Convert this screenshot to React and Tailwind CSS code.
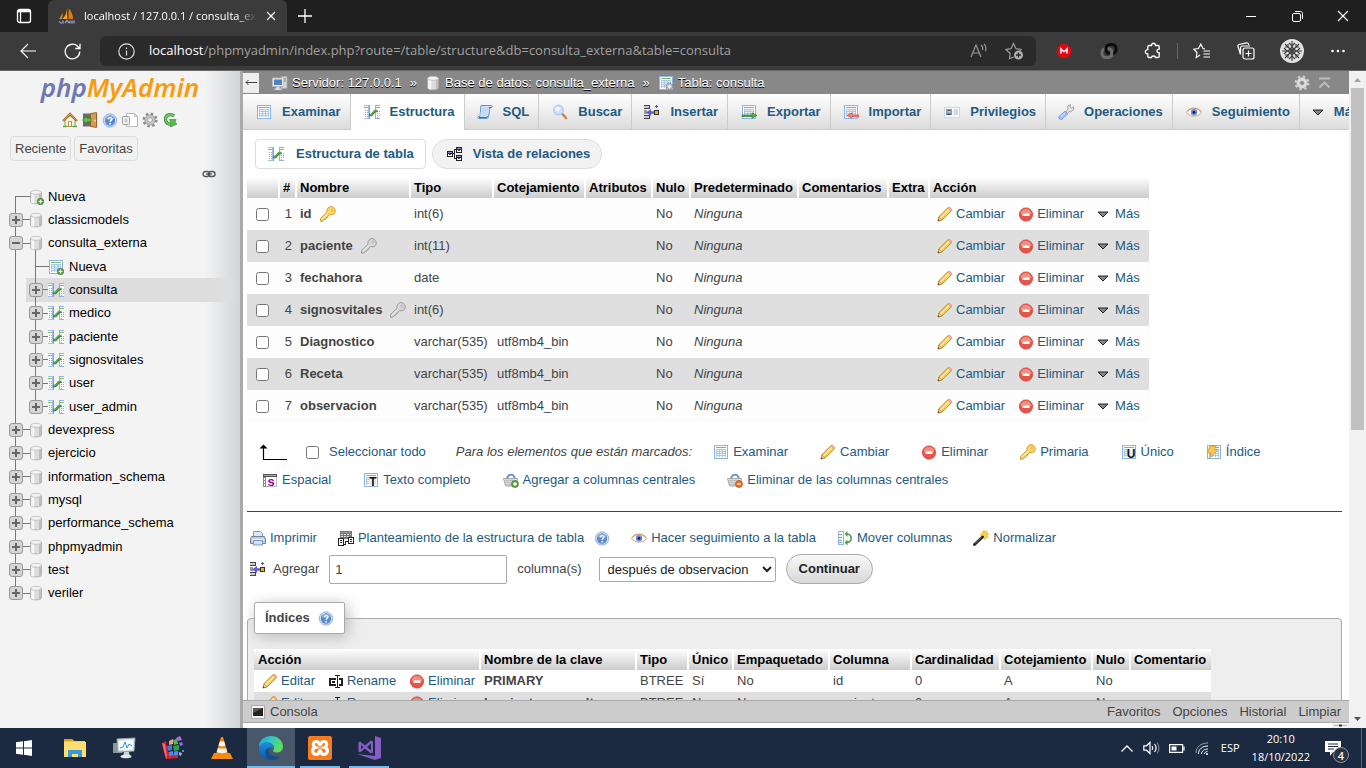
import { useState } from "react";

// 16x16 icon frame
function Ico({ children, size = 16, className = "" }) {
    return (
        <svg
            viewBox="0 0 16 16"
            width={size}
            height={size}
            aria-hidden="true"
            className={`shrink-0 ${className}`}
        >
            {children}
        </svg>
    );
}

/* ---------- phpMyAdmin icons ---------- */

function Grid() {
    return (
        <g shapeRendering="crispEdges">
            <rect x="1" y="1" width="14" height="14" fill="#8db3e2" />
            <rect x="2" y="2" width="12" height="12" fill="#fff" />
            <rect x="3" y="3" width="10" height="1" fill="#7dbb6c" />
            <path d="M3 5h10v8H3z" fill="#a9c6ea" />
            <path d="M4 6h2v1H4zM7 6h2v1H7zM10 6h2v1h-2zM4 8h2v1H4zM7 8h2v1H7zM10 8h2v1h-2zM4 10h2v1H4zM7 10h2v1H7zM10 10h2v1h-2zM4 12h2v1H4zM7 12h2v1H7zM10 12h2v1h-2z" fill="#fff" />
        </g>
    );
}

function BrowseIcon() {
    return <Ico><Grid /></Ico>;
}

function StructIcon() {
    return (
        <Ico>
            <g shapeRendering="crispEdges">
                <path d="M0 1h5v14H0z" fill="#9fc0ea" />
                <path d="M0 2h4v12H0z" fill="#fff" />
                <path d="M0 3h4v1H0z" fill="#7dbb6c" />
                <path d="M1 6h1v1H1zM3 6h1v1H3zM1 8h1v1H1zM3 8h1v1H3zM1 10h1v1H1zM3 10h1v1H3zM1 12h1v1H1zM3 12h1v1H3z" fill="#7ea9dd" />
                <path d="M5 1h1v14H5z" fill="#7ba6dc" />
                <path d="M11 1h5v14h-5z" fill="#8db3e2" />
                <path d="M12 2h4v12h-4z" fill="#fff" />
                <path d="M12 3h4v1h-4z" fill="#7dbb6c" />
                <path d="M13 7h1v1h-1zM15 7h1v1h-1zM13 9h1v1h-1zM15 9h1v1h-1zM13 11h1v1h-1zM15 11h1v1h-1zM13 13h1v1h-1z" fill="#7ea9dd" />
            </g>
            <path d="M5 11h2.500l3.500-4h2.500" stroke="#37803a" strokeWidth="2.600" fill="none" strokeLinejoin="round" />
            <path d="M5.500 10.700h1.800l3.500-4h2.200" stroke="#5fae5a" strokeWidth="1.200" fill="none" />
        </Ico>
    );
}

function SqlIcon() {
    return (
        <Ico>
            <path d="M4 1.500h10.500c1 0 1 2-.3 2H13l-1.500 9c-.2 1.500-1 2-2 2H1.500c-1 0-1.200-2 0-2H3z" fill="#dcebfb" stroke="#5b90cf" />
            <path d="M4.500 2l-1.500 11h7l1.500-10z" fill="#c3dbf7" />
            <path d="M2 13.500h8l1-1.500" stroke="#3f76ba" fill="none" />
            <path d="M11.500 3.500h3" stroke="#3f76ba" />
        </Ico>
    );
}

function SearchIcon() {
    return (
        <Ico>
            <path d="M10 9.500l4 4.500" stroke="#c58a4a" strokeWidth="2.600" strokeLinecap="round" />
            <circle cx="6.500" cy="6" r="4.700" fill="#cfe4fb" stroke="#b4c9e6" strokeWidth="1.400" />
            <circle cx="5.500" cy="5" r="2.200" fill="#eef6ff" />
        </Ico>
    );
}

function InsertIcon() {
    return (
        <Ico>
            <g shapeRendering="crispEdges">
                <path d="M0 1h6v1H0zM0 4h6v1H0zM0 11h6v1H0zM0 14h6v1H0zM5 1h1v4H5zM5 11h1v4H5z" fill="#444" />
                <path d="M0 2h5v2H0zM0 12h5v2H0z" fill="#ccc" />
                <path d="M0 6h3v4H0z" fill="#999" />
                <path d="M10 6h5v5h-5z" fill="#333" />
                <path d="M11 7h3v3h-3z" fill="#f4b400" />
                <path d="M12 1h1v3h-1zM11 2h3v1h-3z" fill="#5a4fcf" />
            </g>
            <path d="M2 8.500L7 5v2.200h3v2.600H7V12z" fill="#5f5fd3" />
        </Ico>
    );
}

function ExportIcon() {
    return (
        <Ico>
            <Grid />
            <path d="M1 11h10V8.800l5 2.700-5 2.700V12.500H1z" fill="#5da84f" stroke="#2f7a2a" strokeWidth=".7" />
        </Ico>
    );
}

function ImportIcon() {
    return (
        <Ico>
            <Grid />
            <path d="M16 11H9V8.800l-5 2.700 5 2.700v-1.700h7z" fill="#f58a8a" stroke="#dc3a3a" strokeWidth=".7" />
        </Ico>
    );
}

function RightsIcon() {
    return (
        <Ico>
            <rect x=".5" y="3.500" width="15" height="10" fill="#f7f9fc" stroke="#d3d8df" />
            <rect x="2" y="5" width="6" height="6" fill="#6ea4e4" />
            <circle cx="5" cy="7.500" r="1.700" fill="#e2b07a" />
            <path d="M3.300 6.800c.5-1.500 3-1.500 3.400 0z" fill="#6b3d1c" />
            <path d="M2.500 11c.5-2 4.500-2 5 0z" fill="#2c5f9f" />
            <path d="M9.500 6h4.500M9.500 8h4.500M9.500 10h4.500" stroke="#9db5d2" strokeWidth=".9" />
        </Ico>
    );
}

function WrenchIcon() {
    return (
        <Ico>
            <path d="M8 8l2-3-.3-3L12.500.5l-.3 2.500 1.300 1 2.300-1-.5 3-2.500 1.800-1.800-.3L9.500 9.500z" fill="#e6e9ec" stroke="#8c939b" strokeWidth=".8" />
            <path d="M1.200 12.300L7 7.200l2.700 2.600L4.500 15c-2 1.500-5-.7-3.300-2.700z" fill="#a4c3f4" stroke="#6c8fce" strokeWidth=".8" />
            <path d="M3 12.500l4-3.600" stroke="#d5e5ff" />
        </Ico>
    );
}

function EyeIcon() {
    return (
        <Ico>
            <path d="M.5 8.500C3 3 13 3 15.500 8.500 13 13.500 3 13.500.5 8.500z" fill="#f6ded0" stroke="#dcae92" />
            <path d="M2 8.500C4 5 12 5 14 8.500 12 12 4 12 2 8.500z" fill="#fff" />
            <circle cx="8" cy="8.200" r="3.200" fill="#6b96dc" />
            <circle cx="8" cy="8.200" r="1.500" fill="#16284f" />
            <path d="M1 7.500C4 3 12 3 15 7.500" stroke="#c99777" fill="none" />
        </Ico>
    );
}

function Caret() {
    return (
        <svg viewBox="0 0 12 16" width="12" height="16" aria-hidden="true" className="shrink-0">
            <path d="M1 6h10L6 11z" fill="#888" stroke="#111" strokeWidth=".9" />
        </svg>
    );
}

function RelationIcon() {
    return (
        <Ico>
            <g shapeRendering="crispEdges">
                <path d="M0 5h6v6H0zM9 1h6v6H9zM9 9h6v6H9z" fill="#222" />
                <path d="M1 6h4v1H1zM10 2h4v1h-4zM10 10h4v1h-4z" fill="#8f8fe0" />
                <path d="M1 8h4v2H1zM10 4h4v2h-4zM10 12h4v2h-4z" fill="#fff" />
                <path d="M2 8h2v1H2zM11 4h2v1h-2zM11 12h2v1h-2z" fill="#555" />
                <path d="M6 7h1v1H6zM7 3h2v1H7zM7 4h1v8H7zM7 12h2v1H7z" fill="#222" />
            </g>
        </Ico>
    );
}

function KeyIcon({ gray }) {
    const fill = gray ? "#d8d8d8" : "#ffd75e";
    const line = gray ? "#909090" : "#c98f1c";
    return (
        <Ico>
            <path
                d="M7.800 2.500c1.500-2.500 5-2.500 6.600 0s.8 5.500-1.900 6.100c-1 .3-2 .2-2.800-.2L8.200 9.700l-.6 1.700-1.500.4-.5 1.500-1.600.3L2.800 15.200H.6l-.1-2.600 6.500-6.300c-.3-1.300.0-2.700.8-3.800z"
                fill={fill}
                stroke={line}
                strokeWidth=".9"
            />
            <circle cx="12" cy="4" r="1.100" fill="#fff" stroke={line} strokeWidth=".6" />
            <path d="M2 12.800l6-5.600" stroke="#fff" strokeOpacity=".7" />
        </Ico>
    );
}

function PencilIcon() {
    return (
        <Ico>
            <path d="M1 15l1-4.500L11 1.700c1.200-1.200 4.500 1.700 3.300 3.200L5 14z" fill="#f9c956" stroke="#b98424" strokeWidth=".9" />
            <path d="M3.800 11.600L12.300 3.400" stroke="#fff0b8" strokeWidth="1.300" />
            <path d="M10.800 2.300l3 3 .9-1c.6-1.500-2-3.800-3-2.900z" fill="#f1a98c" />
            <path d="M1 15l.9-3.800L4.800 14z" fill="#f3dfc0" stroke="#8a6a3a" strokeWidth=".5" />
            <path d="M1 15l.4-1.700 1.300 1.300z" fill="#333" />
        </Ico>
    );
}

function DropIcon() {
    return (
        <Ico>
            <circle cx="8" cy="8.500" r="6.600" fill="#e8564a" stroke="#c9403a" strokeWidth=".8" />
            <path d="M2.500 7.500a5.600 5.600 0 0111 0c-3 1.200-8 1.200-11 0z" fill="#f38d80" />
            <rect x="4.500" y="7.500" width="7" height="2.400" fill="#fff" />
        </Ico>
    );
}

// a table icon with one glyph over it
function LetterIcon({ letter, tone = "#111" }) {
    return (
        <Ico>
            <Grid />
            <rect x="6" y="5" width="8" height="9" fill="#fff" fillOpacity=".6" />
            <text x="10" y="14" fontSize="12" fontWeight="700" textAnchor="middle" fill={tone} fontFamily="Liberation Sans, sans-serif">
                {letter}
            </text>
        </Ico>
    );
}

function SpatialIcon() {
    return (
        <Ico>
            <g shapeRendering="crispEdges">
                <path d="M1 2h14v3H1z" fill="#555" />
                <path d="M2 3h12v1H2z" fill="#a9a9a9" />
                <path d="M1 5h3v10H1z" fill="#888" />
                <path d="M2 6h1v2H2zM2 9h1v2H2zM2 12h1v2H2z" fill="#fff" />
                <path d="M14 5h1v10h-1zM4 14h10v1H4z" fill="#bbb" />
            </g>
            <text x="9" y="14" fontSize="13" fontWeight="700" textAnchor="middle" fill="#a0009a" fontFamily="Liberation Sans, sans-serif">
                s
            </text>
        </Ico>
    );
}

function IndexIcon() {
    return (
        <Ico>
            <Grid />
            <path d="M4 2h6L8.500 5.500H12L3.500 14.500 5 9H1z" fill="#f7c65c" stroke="#d6962c" strokeWidth=".8" />
        </Ico>
    );
}

function BasketIcon({ minus }) {
    return (
        <Ico>
            <path d="M4 7.500C4.500 1 11.500 1 12 7.500" stroke="#6b9bd1" strokeWidth="2" fill="none" />
            <path d="M.5 6.500h14l-1.500 7.500H2.500z" fill="#f2f2f2" stroke="#a5a5a5" />
            <path d="M3 7v6M5 7v7M7 7v7M9 7v7M11 7v6M1 8.500h13M1.500 10.500h12M2 12.500h10" stroke="#b5b5b5" strokeWidth=".8" />
            <circle cx="12" cy="12" r="3.500" fill={minus ? "#ef6c1f" : "#5fa544"} stroke={minus ? "#c44d0c" : "#3c7d26"} strokeWidth=".7" />
            <path d={minus ? "M10 12h4" : "M10 12h4M12 10v4"} stroke="#fff" strokeWidth="1.300" />
        </Ico>
    );
}

function PrintIcon() {
    return (
        <Ico>
            <path d="M3.500 7V1.500h7l2 2V7z" fill="#d9e9fb" stroke="#6c9bd3" />
            <path d="M1.500 6.500h13l1 3v4H.5v-4z" fill="#c9ced6" stroke="#7a838f" />
            <path d="M2 9.500h12" stroke="#f4f4f4" />
            <path d="M3.500 10.500h9v4.500h-9z" fill="#cfe2fa" stroke="#6c9bd3" />
        </Ico>
    );
}

function ProposeIcon() {
    return (
        <Ico>
            <g shapeRendering="crispEdges">
                <path d="M2 1h12v8H2z" fill="#777" />
                <path d="M3 4h2v1H3zM6 4h2v1H6zM9 4h2v1H9zM12 4h1v1h-1zM3 6h2v1H3zM6 6h2v1H6zM9 6h2v1H9z" fill="#ddd" />
                <path d="M3 2h10v1H3z" fill="#999" />
                <path d="M0 8h6v8H0zM10 7h6v7h-6z" fill="#222" />
                <path d="M1 9h4v6H1zM11 8h4v5h-4z" fill="#fff" />
                <path d="M2 10h2v1H2zM2 12h2v1H2zM12 9h2v1h-2zM12 11h2v1h-2zM6 14h2v1H6zM7 11h1v3H7zM8 11h2v1H8z" fill="#222" />
            </g>
        </Ico>
    );
}

function HelpIcon() {
    return (
        <Ico>
            <circle cx="8" cy="8.500" r="6.600" fill="#dfeafa" stroke="#7fa3d6" strokeWidth=".9" />
            <circle cx="8" cy="8.500" r="5.200" fill="#5a8acb" />
            <path d="M3.500 7a4.700 4.700 0 019 0c-2.500 1-6.500 1-9 0z" fill="#86aee4" />
            <path d="M6.200 7.300c0-2.200 3.700-2.200 3.700-.2 0 1.300-1.800 1.300-1.800 2.700" stroke="#fff" strokeWidth="1.400" fill="none" />
            <circle cx="8.100" cy="11.700" r=".9" fill="#fff" />
        </Ico>
    );
}

function MoveIcon() {
    return (
        <Ico>
            <g shapeRendering="crispEdges">
                <path d="M1 1h6v14H1z" fill="#8db3e2" />
                <path d="M2 2h4v12H2z" fill="#fff" />
                <path d="M2 4h3v1H2zM2 7h3v1H2zM2 10h3v1H2zM2 12h3v1H2z" fill="#7ea9dd" />
            </g>
            <path d="M10 4c5.500.5 5.500 8 0 8.500" stroke="#4b9c4b" strokeWidth="1.600" fill="none" />
            <path d="M10.500 1v6L7.500 4zM10.500 9.500v6l-3-3z" fill="#4b9c4b" />
        </Ico>
    );
}

function WandIcon() {
    return (
        <Ico>
            <path d="M11 0l.8 2.700L14 1l-.8 2.600L16 4l-2.500 1.500L15.500 8l-2.800-.5L12 10l-1.500-2.500L8 8.500 9 6 7 4.500l2.500-.6L9 1.500l1.500 1z" fill="#ffd34a" stroke="#e09a1a" strokeWidth=".5" />
            <path d="M1.500 14.500L9.500 7" stroke="#222" strokeWidth="2.800" strokeLinecap="round" />
            <path d="M2 13.500L8.500 7.300" stroke="#8b8b8b" strokeWidth=".8" />
        </Ico>
    );
}

function RenameIcon() {
    return (
        <Ico>
            <g shapeRendering="crispEdges">
                <path d="M1 5h7v2H3v4h5v2H1zM11 5h4v8h-4v-2h2V7h-2z" fill="#222" />
                <path d="M4 8h3v2H4z" fill="#222" />
                <path d="M7 2h5v1H7zM7 14h5v1H7zM9 3h1v11H9z" fill="#222" />
            </g>
        </Ico>
    );
}

function DbIcon({ add }) {
    return (
        <Ico>
            <path d="M2.500 3.500v9.500c0 2.500 11 2.500 11 0V3.500z" fill="#dcdcdc" stroke="#a9a9a9" strokeWidth=".8" />
            <path d="M4 5v9M5.500 5v9.500" stroke="#fafafa" strokeWidth="1.300" />
            <path d="M12 5v9" stroke="#b5b5b5" strokeWidth="1.500" />
            <ellipse cx="8" cy="3.300" rx="5.500" ry="2" fill="#f3f3f3" stroke="#b5b5b5" strokeWidth=".7" />
            {add && (
                <>
                    <circle cx="12.500" cy="12.500" r="3.200" fill="#5fa544" stroke="#3c7d26" strokeWidth=".7" />
                    <path d="M10.700 12.500h3.600M12.500 10.700v3.600" stroke="#fff" strokeWidth="1.200" />
                </>
            )}
        </Ico>
    );
}

function NewTableIcon() {
    return (
        <Ico>
            <Grid />
            <circle cx="12.500" cy="12.500" r="3.200" fill="#5fa544" stroke="#3c7d26" strokeWidth=".7" />
            <path d="M10.700 12.500h3.600M12.500 10.700v3.600" stroke="#fff" strokeWidth="1.200" />
        </Ico>
    );
}

function ServerIcon() {
    return (
        <Ico>
            <path d="M9.500 1.500h5.500v12h-5.500z" fill="#d5d5d5" stroke="#aaa" strokeWidth=".8" />
            <path d="M10.500 4h3.500M10.500 6h3.500" stroke="#777" strokeWidth=".8" />
            <rect x=".5" y="3" width="11" height="8.500" fill="#e8e8e8" stroke="#bbb" strokeWidth=".8" />
            <rect x="2" y="4.500" width="8" height="5.500" fill="#4d83c4" />
            <path d="M4.500 11.500h3v2h2v1.500h-7v-1.500h2z" fill="#ddd" />
        </Ico>
    );
}

function TableGearIcon() {
    return (
        <Ico>
            <Grid />
            <circle cx="11.500" cy="11.500" r="3.200" fill="#c9c9c9" stroke="#8a8a8a" strokeDasharray="1.500 1" strokeWidth="1.500" />
            <circle cx="11.500" cy="11.500" r="1.200" fill="#fff" />
        </Ico>
    );
}

function GearIcon({ fill = "#c4c4c4", line = "#8c8c8c", hole = "#f3f3f3" }) {
    return (
        <Ico>
            <circle cx="8" cy="8" r="6.200" fill="none" stroke={line} strokeWidth="2.600" strokeDasharray="2.400 2.470" />
            <circle cx="8" cy="8" r="5.200" fill={fill} stroke={line} strokeWidth=".6" />
            <circle cx="8" cy="8" r="2.300" fill={hole} stroke={line} strokeWidth=".7" />
        </Ico>
    );
}

function HomeIcon() {
    return (
        <Ico>
            <path d="M3 8v6.500h10V8L8 3.500z" fill="#f7f1e3" stroke="#7da352" />
            <path d="M6.500 14.500V9.500h3v5z" fill="#fff" stroke="#b98a4a" />
            <path d="M1 9L8 2l7 7" stroke="#a86a2a" strokeWidth="2.400" fill="none" />
            <path d="M1 8.600L8 1.800l7 6.800" stroke="#e2b270" strokeWidth=".9" fill="none" />
            <path d="M1 14.500h4M11 14.500h4" stroke="#5fa544" strokeWidth="1.500" />
        </Ico>
    );
}

function ExitIcon() {
    return (
        <Ico>
            <path d="M1 1.500h14v13H1z" fill="#6a6a6a" />
            <path d="M8.500 1.500L14.500.5v15l-6-1z" fill="#d79a55" stroke="#8f5b22" strokeWidth=".8" />
            <circle cx="13" cy="8.500" r=".9" fill="#ffe08a" />
            <path d="M.5 8l4.500-4v2.300h4v3.500H5V12z" fill="#6cc04a" stroke="#2f7a2a" strokeWidth=".7" />
        </Ico>
    );
}

function DocsIcon() {
    return (
        <Ico>
            <path d="M4.500 1.500h8l3 3v10h-11z" fill="#fff" stroke="#b9b9b9" />
            <path d="M12.500 1.500v3h3" fill="none" stroke="#b9b9b9" />
            <rect x=".5" y="4.500" width="7" height="8" rx="1" fill="#f4f4f4" stroke="#999" />
            <path d="M2.500 6.500h3v4h-3z" fill="#ccc" />
        </Ico>
    );
}

function ReloadIcon() {
    return (
        <Ico>
            <path d="M12 4C9 1.500 3.500 2.500 3.500 7S7 12.500 9 12" stroke="#2f8a2f" strokeWidth="3.200" fill="none" />
            <path d="M12 4C9 1.500 3.500 2.500 3.500 7S7 12.500 9 12" stroke="#7bcb6b" strokeWidth="1.600" fill="none" />
            <path d="M7.500 7.500h6.500l-1 3 2 1.500-6.500 3 .5-4z" fill="#5cb850" stroke="#2f8a2f" strokeWidth=".6" />
        </Ico>
    );
}

/* ---------- data ---------- */

const navIcons = [
    ["Página principal", HomeIcon],
    ["Salir", ExitIcon],
    ["Documentación", HelpIcon],
    ["Documentación de MariaDB", DocsIcon],
    ["Configuración", GearIcon],
    ["Recargar", ReloadIcon],
];

const tree = [
    { name: "Nueva", kind: "newdb" },
    { name: "classicmodels" },
    { name: "consulta_externa", open: true },
    { name: "Nueva", kind: "newtable", sub: true },
    { name: "consulta", sub: true, active: true },
    { name: "medico", sub: true },
    { name: "paciente", sub: true },
    { name: "signosvitales", sub: true },
    { name: "user", sub: true },
    { name: "user_admin", sub: true, last: true },
    { name: "devexpress" },
    { name: "ejercicio" },
    { name: "information_schema" },
    { name: "mysql" },
    { name: "performance_schema" },
    { name: "phpmyadmin" },
    { name: "test" },
    { name: "veriler", last: true },
];

const tabs = [
    ["Examinar", BrowseIcon],
    ["Estructura", StructIcon],
    ["SQL", SqlIcon],
    ["Buscar", SearchIcon],
    ["Insertar", InsertIcon],
    ["Exportar", ExportIcon],
    ["Importar", ImportIcon],
    ["Privilegios", RightsIcon],
    ["Operaciones", WrenchIcon],
    ["Seguimiento", EyeIcon],
    ["Más", Caret],
];

const columns = [
    { name: "id", type: "int(6)", key: "gold" },
    { name: "paciente", type: "int(11)", key: "gray" },
    { name: "fechahora", type: "date" },
    { name: "signosvitales", type: "int(6)", key: "gray" },
    { name: "Diagnostico", type: "varchar(535)", collation: "utf8mb4_bin" },
    { name: "Receta", type: "varchar(535)", collation: "utf8mb4_bin" },
    { name: "observacion", type: "varchar(535)", collation: "utf8mb4_bin" },
];

const columnHeads = ["", "#", "Nombre", "Tipo", "Cotejamiento", "Atributos", "Nulo", "Predeterminado", "Comentarios", "Extra", "Acción"];
const columnWidths = [32, 17, 114, 83, 92, 67, 38, 108, 90, 41, 220];

const indexHeads = ["Acción", "Nombre de la clave", "Tipo", "Único", "Empaquetado", "Columna", "Cardinalidad", "Cotejamiento", "Nulo", "Comentario"];
const indexWidths = [226, 156, 52, 45, 96, 82, 89, 92, 38, 81];
const indexes = [
    ["PRIMARY", "BTREE", "Sí", "No", "id", "0", "A", "No", ""],
    ["lpaciente_consulta", "BTREE", "No", "No", "paciente", "0", "A", "No", ""],
];

/* ---------- shared bits ---------- */

function IconLink({ icon, children, className = "gap-1" }) {
    return (
        <a href="#" className={`flex items-center whitespace-nowrap text-[#235a81] ${className}`}>
            {icon}
            {children}
        </a>
    );
}

function HeadRow({ heads }) {
    return (
        <thead>
            <tr className="h-[21px] bg-linear-to-b from-white to-[#cccccc]">
                {heads.map((h, i) => (
                    <th key={i} scope="col" className="border-l-2 border-white px-[3px] text-left font-bold whitespace-nowrap text-black first:border-l-0 first:pl-1">
                        {h}
                    </th>
                ))}
            </tr>
        </thead>
    );
}

function Widths({ list }) {
    return (
        <colgroup>
            {list.map((w, i) => (
                <col key={i} style={{ width: w }} />
            ))}
        </colgroup>
    );
}

/* ---------- browser frame ---------- */

function TitleBar() {
    return (
        <div className="flex h-8 items-stretch bg-[#1f1f1f] text-white">
            <button aria-label="Pestañas" className="flex w-12 items-center justify-center">
                <svg width="16" height="16" viewBox="0 0 16 16" fill="none" stroke="#fff" strokeWidth="1.300">
                    <rect x="1.500" y="1.500" width="13" height="13" rx="2" />
                    <path d="M2 3h12" strokeWidth="2.600" />
                    <path d="M4.500 4v10" />
                </svg>
            </button>
            <div className="flex w-[239px] items-center rounded-t-md bg-[#3b3b3b] px-[10px]">
                <svg width="18" height="18" viewBox="0 0 18 18" className="shrink-0">
                    <path d="M8.500 1c.5 4-1 8-4 11h5z" fill="#f7a01c" />
                    <path d="M10.500 1.500c3 2.500 4.500 6.500 4.500 10.500h-4.500z" fill="#e07b10" />
                    <path d="M5 5.500L1 12h3z" fill="#c98a3a" />
                    <path d="M1 14.500l3 2M5 13.500v3M7 16l2-2.500 2 2.500M12 13.500v3M14 13.500v3M16 13.500v3" stroke="#8d93c4" strokeWidth="1.500" fill="none" />
                </svg>
                <div className="ml-2 flex-1 overflow-hidden mask-r-from-90% text-[11px] whitespace-nowrap">
                    localhost / 127.0.0.1 / consulta_externa
                </div>
                <button aria-label="Cerrar pestaña" className="ml-[9px]">
                    <svg width="12" height="12" viewBox="0 0 12 12" stroke="#fff" strokeWidth="1.200">
                        <path d="M2 2l8 8M10 2l-8 8" />
                    </svg>
                </button>
            </div>
            <button aria-label="Nueva pestaña" className="flex w-9 items-center justify-center">
                <svg width="16" height="16" viewBox="0 0 16 16" stroke="#fff" strokeWidth="1.300">
                    <path d="M8 1v14M1 8h14" />
                </svg>
            </button>
            <div className="ml-auto flex">
                <button aria-label="Minimizar" className="flex w-[46px] items-center justify-center">
                    <svg width="10" height="10" viewBox="0 0 10 10" stroke="#fff"><path d="M0 5.500h10" /></svg>
                </button>
                <button aria-label="Restaurar" className="flex w-[46px] items-center justify-center">
                    <svg width="11" height="11" viewBox="0 0 11 11" fill="none" stroke="#fff">
                        <rect x=".5" y="2.500" width="8" height="8" rx="1.500" />
                        <path d="M3 .5h5.500c1.200 0 2 .8 2 2V8" />
                    </svg>
                </button>
                <button aria-label="Cerrar" className="flex w-[46px] items-center justify-center">
                    <svg width="12" height="12" viewBox="0 0 12 12" stroke="#fff" strokeWidth="1.200"><path d="M1 1l10 10M11 1L1 11" /></svg>
                </button>
            </div>
        </div>
    );
}

function ToolBar() {
    return (
        <div className="flex h-[39px] items-center border-b border-[#666] bg-[#3b3b3b] text-white">
            <button aria-label="Atrás" className="ml-5">
                <svg width="16" height="16" viewBox="0 0 16 16" fill="none" stroke="#fff" strokeWidth="1.200"><path d="M16 8H1M8 1L1 8l7 7" /></svg>
            </button>
            <button aria-label="Actualizar" className="ml-7">
                <svg width="17" height="17" viewBox="0 0 17 17" fill="none" stroke="#fff" strokeWidth="1.300">
                    <path d="M15.800 8.500A7.300 7.300 0 1113.800 3.500L16 5.500M16 .8v4.700h-4.700" />
                </svg>
            </button>
            <div className="ml-[19px] flex h-[30px] min-w-0 flex-1 items-center rounded-md bg-[#2a2a2a] pr-3 pl-[18px]">
                <svg width="17" height="17" viewBox="0 0 17 17" fill="none" stroke="#ddd" strokeWidth="1.200" className="shrink-0">
                    <circle cx="8.500" cy="8.500" r="7.700" />
                    <path d="M8.500 7.500v5M8.500 4.500v1.500" />
                </svg>
                <div className="ml-[14px] flex-1 overflow-hidden text-[13px] whitespace-nowrap text-[#a0a0a0]">
                    <span className="text-white">localhost</span>/phpmyadmin/index.php?route=/table/structure&db=consulta_externa&table=consulta
                </div>
                <svg width="18" height="16" viewBox="0 0 18 16" fill="none" stroke="#9a9a9a" strokeWidth="1.200">
                    <path d="M1 14L6 2l5 12M3 10h6M11 2c1.500 1 2 3 1.500 5M14 .8c2 2 2.300 5 1.500 7.500" />
                </svg>
                <svg width="19" height="18" viewBox="0 0 19 18" fill="none" stroke="#9a9a9a" strokeWidth="1.200" className="ml-[17px]">
                    <path d="M9 15l-4.500 1.500.7-5L1 7.500l5-.8L8.500 1.500l2.500 5.200 5 .8-1.500 1.500" />
                    <circle cx="13.500" cy="13" r="4.500" fill="#b0b0b0" stroke="none" />
                    <path d="M11 13h5M13.500 10.500v5" stroke="#2a2a2a" strokeWidth="1.300" />
                </svg>
            </div>
            <div className="mr-5 ml-5 flex items-center">
                <svg width="16" height="16" viewBox="0 0 16 16">
                    <circle cx="8" cy="8" r="7.300" fill="#e30613" />
                    <path d="M5 10.500V6L8 8.800 11 6v4.500" stroke="#fff" strokeWidth="1.500" fill="none" />
                </svg>
                <svg width="18" height="18" viewBox="0 0 18 18" fill="none" strokeWidth="3" className="ml-7">
                    <rect x="2" y="6.500" width="10" height="9" rx="4" stroke="#6c6c6c" />
                    <rect x="6" y="2.500" width="10" height="9" rx="4" stroke="#0c0c0c" />
                    <path d="M11 8.500c1.500 2 .5 5-1 6" stroke="#6c6c6c" />
                </svg>
                <svg width="18" height="18" viewBox="0 0 18 18" fill="none" stroke="#fff" strokeWidth="1.300" className="ml-[26px]">
                    <path d="M5 3.500h2.500c0-3 4-3 4 0H14c.8 0 1.200.4 1.200 1.200v2.500c-3-.4-3 4 0 3.600v3.500c0 .8-.4 1.200-1.200 1.200h-2.500c0-2-4-2-4 0H5c-.8 0-1.200-.4-1.200-1.200V12C.5 12 .5 7.700 3.800 7.700v-3c0-.8.4-1.200 1.200-1.200z" />
                </svg>
                <span className="mx-[15px] h-4 w-px bg-[#666]" />
                <svg width="18" height="18" viewBox="0 0 18 18" fill="none" stroke="#fff" strokeWidth="1.200">
                    <path d="M7 13l-3.800 2.500.8-5L.8 7.200l4.700-.7L7.800 2 10 6.500l2 .3M10.500 9H17M10.500 12H17M10.500 15H17" />
                </svg>
                <svg width="18" height="18" viewBox="0 0 18 18" fill="none" stroke="#fff" strokeWidth="1.200" className="ml-[26px]">
                    <path d="M3.500 12.500L1 4.500c-.3-1 .2-1.700 1-2L9.500.8c1-.2 1.600.2 2 1.200l.3 1M3.500 12.500V6c0-1.200.8-2 2-2H13" />
                    <rect x="6" y="6" width="11" height="11" rx="2" />
                    <path d="M8.500 11.500h6M11.500 8.500v6" />
                </svg>
                <svg width="24" height="24" viewBox="0 0 24 24" className="ml-[25px]">
                    <circle cx="12" cy="12" r="12" fill="#e2e2e2" />
                    <g stroke="#3a3a3a" strokeWidth="1.100" fill="none">
                        <path d="M12 2v20M2 12h20M5 5l14 14M19 5L5 19" />
                        <path d="M9 4l3 3 3-3M9 20l3-3 3 3M4 9l3 3-3 3M20 9l-3 3 3 3M12 8l4 4-4 4-4-4z" />
                        <path d="M5 8h3V5M16 5v3h3M5 16h3v3M16 19v-3h3" />
                    </g>
                </svg>
                <svg width="16" height="4" viewBox="0 0 16 4" fill="#fff" className="ml-[26px]">
                    <circle cx="2.500" cy="2" r="1.300" /><circle cx="8" cy="2" r="1.300" /><circle cx="13.500" cy="2" r="1.300" />
                </svg>
            </div>
        </div>
    );
}

/* ---------- sidebar ---------- */

function TreeRow({ item }) {
    const x = item.sub ? 35 : 15;
    const isNew = item.kind === "newdb" || item.kind === "newtable";
    const top = item.kind === "newdb" ? "50%" : "0";
    const icon = item.kind === "newdb" ? <DbIcon add /> : item.kind === "newtable" ? <NewTableIcon /> : item.sub ? <StructIcon /> : <DbIcon />;
    return (
        <li className="flex flex-1 items-center">
            <span className="relative flex w-full items-center self-stretch">
                {item.active && <span className="absolute inset-y-0 right-0 left-[26px] bg-linear-to-r from-[#ddd] from-90% to-transparent" />}
                <svg width="60" height="100%" className="absolute inset-y-0 left-0 overflow-visible" stroke="#777" aria-hidden="true">
                    <g shapeRendering="crispEdges">
                        {item.sub && <path d="M15.500 0v24" />}
                        <line x1={x + 0.5} x2={x + 0.5} y1={top} y2={item.last ? "50%" : "103%"} />
                        <line x1={x} x2={x + 15} y1="50%" y2="50%" />
                        {item.open && <line x1="35.500" x2="35.500" y1="50%" y2="100%" />}
                    </g>
                </svg>
                <span className={`relative flex items-center ${item.sub ? "pl-[29px]" : "pl-[9px]"}`}>
                    {isNew ? (
                        <span className="w-[14px]" />
                    ) : (
                        <button aria-label={item.open ? "Contraer" : "Expandir"} className="flex size-[14px] items-center justify-center rounded-[3px] border border-[#999] bg-[#d5d5d5]">
                            <svg width="8" height="8" viewBox="0 0 8 8" stroke="#666" strokeWidth="2" shapeRendering="crispEdges">
                                <path d={item.open ? "M0 4h8" : "M0 4h8M4 0v8"} />
                            </svg>
                        </button>
                    )}
                    <a href="#" className={`ml-[5px] flex items-center whitespace-nowrap text-black ${item.sub ? "gap-[5px]" : "gap-1"}`}>
                        {icon}
                        {item.name}
                    </a>
                </span>
            </span>
        </li>
    );
}

function Sidebar() {
    return (
        <aside className="flex w-[243px] shrink-0 flex-col border-r-[3px] border-[#aaa] bg-linear-to-r from-[#f3f3f3] from-85% to-[#d2d6da]">
            <a href="#" className="text-center font-['Noto_Sans','Open_Sans',sans-serif] text-[26px] leading-8 font-semibold italic">
                <span className="text-[#6c78af]">php</span>
                <span className="text-[#f89c0e]">MyAdmin</span>
            </a>
            <div className="mt-[9px] flex justify-center gap-1">
                {navIcons.map(([label, Icon]) => (
                    <a key={label} href="#" aria-label={label}><Icon /></a>
                ))}
            </div>
            <div className="mt-2 flex gap-[3px] pl-[10px]">
                <button className="h-[25px] rounded-sm border border-[#ddd] bg-[#f2f2f2] px-1">Reciente</button>
                <button className="h-[25px] rounded-sm border border-[#ddd] bg-[#f2f2f2] px-1">Favoritas</button>
            </div>
            <button aria-label="Enlazar con el panel principal" className="mt-[9px] mr-6 self-end">
                <svg width="14" height="8" viewBox="0 0 14 8" fill="none" stroke="#555" strokeWidth="1.400">
                    <rect x="1" y="1.500" width="6.500" height="5" rx="2.500" />
                    <rect x="6.500" y="1.500" width="6.500" height="5" rx="2.500" />
                    <path d="M4 4h6" />
                </svg>
            </button>
            <ul className="mt-[7px] flex h-[420px] flex-col">
                {tree.map((item, i) => (
                    <TreeRow key={i} item={item} />
                ))}
            </ul>
        </aside>
    );
}

/* ---------- main panel ---------- */

function Breadcrumb() {
    const glow = "flex items-center gap-1 text-white text-shadow-[0_1px_0_#000]";
    return (
        <nav className="flex h-[23px] shrink-0 items-center bg-[#888]">
            <button aria-label="Ocultar panel" className="flex h-5 w-4 items-center justify-center bg-[#eee]">
                <svg width="12" height="9" viewBox="0 0 12 9" stroke="#444" fill="none"><path d="M12 4.500H1M3.500 2L1 4.500 3.500 7" /></svg>
            </button>
            <div className="ml-[13px] flex items-center gap-2">
                <a href="#" className={glow}><ServerIcon />Servidor: 127.0.0.1</a>
                <span className={glow}>»</span>
                <a href="#" className={glow}><DbIcon />Base de datos: consulta_externa</a>
                <span className={glow}>»</span>
                <a href="#" className={glow}><TableGearIcon />Tabla: consulta</a>
            </div>
            <div className="mr-[18px] ml-auto flex items-center gap-2">
                <button aria-label="Opciones de página"><GearIcon fill="#ddd" line="#ccc" hole="#888" /></button>
                <button aria-label="Subir">
                    <svg width="13" height="12" viewBox="0 0 13 12" stroke="#bbb" strokeWidth="2" fill="none"><path d="M1 1.500h11M1.500 10.500l5-5 5 5" /></svg>
                </button>
            </div>
        </nav>
    );
}

function Tabs() {
    const [tab, setTab] = useState("Estructura");
    return (
        <div className="flex h-9 shrink-0 overflow-hidden">
            {tabs.map(([name, Icon]) => (
                <button
                    key={name}
                    onClick={() => setTab(name)}
                    className={`flex shrink-0 items-center gap-[10px] border-r pr-[9px] pl-3 font-bold whitespace-nowrap text-[#235a81] first:pl-[13px] nth-[2n]:pl-[13px] ${
                        tab === name
                            ? "border-[#ccc] bg-white"
                            : "border-b border-[#ccc] bg-linear-to-b from-white to-[#dcdcdc]"
                    }`}
                >
                    <Icon />
                    {name}
                </button>
            ))}
        </div>
    );
}

function ColumnTable() {
    return (
        <table className="w-[902px] table-fixed">
            <Widths list={columnWidths} />
            <HeadRow heads={columnHeads} />
            <tbody>
                {columns.map((c, i) => (
                    <tr key={c.name} className="h-8 odd:bg-[#fdfdfd] even:bg-[#dfdfdf]">
                        <td className="pl-[9px]">
                            <input type="checkbox" aria-label={c.name} className="block size-[13px]" />
                        </td>
                        <td className="pr-1 text-right">{i + 1}</td>
                        <th scope="row" className="pl-1 text-left font-bold">
                            <span className="flex items-center gap-2">
                                {c.name}
                                {c.key && <KeyIcon gray={c.key === "gray"} />}
                            </span>
                        </th>
                        <td className="pl-1 whitespace-nowrap">{c.type}</td>
                        <td className="pl-1">{c.collation}</td>
                        <td></td>
                        <td className="pl-1">No</td>
                        <td className="pl-1 italic">Ninguna</td>
                        <td></td>
                        <td></td>
                        <td className="pl-2">
                            <div className="flex items-center gap-[13px]">
                                <IconLink icon={<PencilIcon />} className="gap-[3px]">Cambiar</IconLink>
                                <IconLink icon={<DropIcon />} className="gap-[3px]">Eliminar</IconLink>
                                <IconLink icon={<Caret />} className="gap-[6px]">Más</IconLink>
                            </div>
                        </td>
                    </tr>
                ))}
            </tbody>
        </table>
    );
}

function BulkActions() {
    return (
        <div className="mt-4 pl-3">
            <div className="flex h-7 items-center">
                <svg width="29" height="17" viewBox="0 0 29 17" fill="none" stroke="#000" strokeWidth="1.200" className="shrink-0">
                    <path d="M4.500 3v12.500H28" />
                    <path d="M.5 4.500L4.500.5l4 4z" fill="#000" stroke="none" />
                </svg>
                <label className="ml-[18px] flex items-center gap-[10px] whitespace-nowrap text-[#235a81]">
                    <input type="checkbox" className="size-[13px]" />
                    Seleccionar todo
                </label>
                <em className="ml-[30px] whitespace-nowrap">Para los elementos que están marcados:</em>
                <div className="ml-[21px] flex items-center gap-8">
                    <IconLink icon={<BrowseIcon />}>Examinar</IconLink>
                    <IconLink icon={<PencilIcon />}>Cambiar</IconLink>
                    <IconLink icon={<DropIcon />}>Eliminar</IconLink>
                    <IconLink icon={<KeyIcon />}>Primaria</IconLink>
                    <IconLink icon={<LetterIcon letter="U" />}>Único</IconLink>
                    <IconLink icon={<IndexIcon />}>Índice</IconLink>
                </div>
            </div>
            <div className="flex h-7 items-center gap-8 pl-[3px]">
                <IconLink icon={<SpatialIcon />}>Espacial</IconLink>
                <IconLink icon={<LetterIcon letter="T" />}>Texto completo</IconLink>
                <IconLink icon={<BasketIcon />}>Agregar a columnas centrales</IconLink>
                <IconLink icon={<BasketIcon minus />}>Eliminar de las columnas centrales</IconLink>
            </div>
        </div>
    );
}

function AddColumns() {
    const [count, setCount] = useState("1");
    return (
        <form className="mt-2 flex items-center pl-[3px]" onSubmit={(e) => e.preventDefault()}>
            <InsertIcon />
            <label htmlFor="count" className="ml-[7px]">Agregar</label>
            <input
                id="count"
                value={count}
                onChange={(e) => setCount(e.target.value)}
                className="ml-[10px] h-[29px] w-[178px] rounded-xs border border-[#aaa] bg-white px-[5px] outline-none"
            />
            <label htmlFor="where" className="ml-[10px]">columna(s)</label>
            <select
                id="where"
                defaultValue="observacion"
                className="ml-[17px] h-[25px] w-[177px] rounded-xs border border-[#aaa] bg-white pl-1 text-[#222]"
            >
                <option value="first">al comienzo de la tabla</option>
                <option value="observacion">después de observacion</option>
            </select>
            <button className="ml-[10px] h-[30px] rounded-full border border-[#aaa] bg-linear-to-b from-[#f8f8f8] to-[#d8d8d8] px-3 font-bold text-[#222]">
                Continuar
            </button>
        </form>
    );
}

function IndexPanel() {
    return (
        <fieldset className="mt-[18px] mr-[7px] rounded-t-sm border border-[#aaa] bg-[#eee] px-[6px] pb-6">
            <legend className="flex h-8 items-center gap-2 rounded-xs border border-[#aaa] bg-white px-[10px] font-bold shadow-[3px_3px_15px_#bbb]">
                Índices
                <HelpIcon />
            </legend>
            <table className="mt-[15px] w-[957px] table-fixed">
                <Widths list={indexWidths} />
                <HeadRow heads={indexHeads} />
                <tbody>
                    {indexes.map((row) => (
                        <tr key={row[0]} className="h-[22px] odd:bg-white even:bg-[#dfdfdf]">
                            <td className="pl-2">
                                <div className="flex items-center gap-[13px]">
                                    <IconLink icon={<PencilIcon />} className="gap-[3px]">Editar</IconLink>
                                    <IconLink icon={<RenameIcon />} className="gap-[3px]">Rename</IconLink>
                                    <IconLink icon={<DropIcon />} className="gap-[3px]">Eliminar</IconLink>
                                </div>
                            </td>
                            {row.map((cell, i) => (
                                <td key={i} className="pl-1 whitespace-nowrap nth-[2]:font-bold">{cell}</td>
                            ))}
                        </tr>
                    ))}
                </tbody>
            </table>
        </fieldset>
    );
}

function ConsoleBar() {
    return (
        <div className="shrink-0">
            <div className="flex h-[23px] items-center border-y border-[#aaa] bg-[#ccc] px-2">
                <button className="flex items-center gap-[5px]">
                    <svg width="14" height="14" viewBox="0 0 14 14">
                        <rect x=".5" y=".5" width="13" height="13" fill="#f4f4f4" stroke="#aaa" />
                        <path d="M2 3h10v8H2z" fill="#222" />
                        <path d="M2 3h10L2 8z" fill="#555" />
                    </svg>
                    Consola
                </button>
                <div className="ml-auto flex gap-3">
                    <button>Favoritos</button>
                    <button>Opciones</button>
                    <button>Historial</button>
                    <button>Limpiar</button>
                </div>
            </div>
            <div className="flex h-[5px] justify-end">
                <svg width="17" height="5" viewBox="0 0 17 5" className="bg-[#f1f1f1]">
                    <path d="M2 2.500h13" stroke="#bbb" />
                    <path d="M7 2.500h3" stroke="#333" strokeWidth="2" />
                </svg>
            </div>
        </div>
    );
}

function ScrollBar() {
    return (
        <div className="flex w-[17px] shrink-0 flex-col items-center bg-[#f1f1f1]">
            <svg width="17" height="17" viewBox="0 0 17 17"><path d="M5 11l3.500-4 3.500 4z" fill="#a3a3a3" /></svg>
            <div className="h-[342px] w-[13px] bg-[#c1c1c1]" />
            <svg width="17" height="17" viewBox="0 0 17 17" className="mt-auto"><path d="M5 6l3.500 4L12 6z" fill="#505050" /></svg>
        </div>
    );
}

/* ---------- taskbar ---------- */

const apps = [
    {
        label: "Inicio",
        art: <path d="M2 6.300l7-1v6.200H2zM10 5.200L18 4v7.500h-8zM2 12.500h7v6.200l-7-1zM10 12.500h8V20l-8-1.200z" fill="#fff" />,
    },
    {
        label: "Explorador de archivos",
        art: (
            <>
                <path d="M1 3h8l2 2h11v16H1z" fill="#f7c948" />
                <path d="M1 3h8l1.500 2H1z" fill="#e29d13" />
                <path d="M1 6h22v15H1z" fill="#ffdd6e" />
                <path d="M5 21v-7h14v7h-4v-3H9v3z" fill="#3a96dd" />
            </>
        ),
    },
    {
        label: "Monitor",
        art: (
            <>
                <path d="M1 7h9v10H1z" fill="#8e979e" />
                <path d="M5 3l18-1-1 13-16 1z" fill="#dfe6ea" stroke="#9aa5ac" />
                <path d="M7 5l14-1-.8 9.500-13 .5z" fill="#f6fbff" />
                <path d="M8 12l3-1 2-5 2 6 2-4 3 2" stroke="#3b8ed0" fill="none" />
                <path d="M12 16h5l1 4h-7z" fill="#c8d0d5" />
                <ellipse cx="14" cy="20.500" rx="5.500" ry="1.800" fill="#e4eaee" />
            </>
        ),
    },
    {
        label: "Juego de bloques",
        art: (
            <>
                <path d="M1 7l4-2 2 11 10 2v4l-12 1z" fill="#d3202d" />
                <path d="M1 7l3 1 2 12-1 3z" fill="#f26a6a" />
                <path d="M8 5l4-2v5l-4 1z" fill="#f0a0a0" />
                <path d="M6 10l5-1v5l-4 1z" fill="#3b7be0" />
                <path d="M12 4l4-1 1 5-4 1z" fill="#4bbd4b" />
                <path d="M12 10l6-1v5l-5 1z" fill="#2fa048" />
                <path d="M8 16l4-1v4l-4 1zM13 15.500l4-.5v4l-4 .5z" fill="#4a8cf0" />
                <path d="M15 2l4-2 2 4-4 1z" fill="#b56bd8" />
                <path d="M18 7l3-1 1 3-3 1z" fill="#9a6be0" />
                <path d="M18 16l3 1-1 3-2-1z" fill="#b9a0f0" />
                <circle cx="22" cy="15" r="1" fill="#4ac3f0" />
            </>
        ),
    },
    {
        label: "VLC",
        art: (
            <>
                <path d="M4 17h16l3 6H1z" fill="#f58a0c" />
                <path d="M11 1h2l5 17c-2 2-10 2-12 0z" fill="#f58a0c" />
                <path d="M9.800 5.500h4.400l1.200 4c-1.500 1-5.200 1-6.800 0zM7.800 12.500h8.400l1 3.500c-2 1.500-8.400 1.500-10.400 0z" fill="#f3f3f3" />
            </>
        ),
    },
    {
        label: "Microsoft Edge",
        active: true,
        art: (
            <>
                <defs>
                    <linearGradient id="edgeTop" x1="0" x2="1" y1="0" y2=".4">
                        <stop offset="0" stopColor="#1f9de0" />
                        <stop offset=".5" stopColor="#30c6c8" />
                        <stop offset="1" stopColor="#62dc58" />
                    </linearGradient>
                    <linearGradient id="edgeLow" x1="0" x2="0" y1="0" y2="1">
                        <stop offset="0" stopColor="#1a8fe0" />
                        <stop offset="1" stopColor="#0c59a4" />
                    </linearGradient>
                </defs>
                <path d="M.2 12C-1 5 5 0 12 0s12 5 12 10.500c0 4-3 6-6.500 6-3 0-4-1-3-2.500C16 11 14 7 9 6.500 4 6 1 9 .2 12z" fill="url(#edgeTop)" />
                <path d="M.1 12C1 8 5 6 9 6.700c4 .6 6 3.800 5.300 6.300-.4-1.500-2-2.300-3.500-1.500C7.500 13.500 9 20 15 21.500c2.500.6 5 0 6.500-1C19.500 22.800 16 24 12 24 5 24-.5 18.500.1 12z" fill="url(#edgeLow)" />
                <path d="M10 11.700c-3 .8-4.500 3-3.700 6C7.200 21.500 10 23.500 13 24c3.500-.2 6.500-1.500 8.500-3.700-5 1.700-12-1-12-5.800 0-1 .1-2 .5-2.800z" fill="#134f8f" />
            </>
        ),
    },
    {
        label: "XAMPP",
        running: true,
        art: (
            <>
                <rect width="24" height="24" rx="2" fill="#f47b20" />
                <path d="M8.500 5.500c-4 0-4 4.500-1 6C3 12.500 4 18.500 8.500 18.500c3 0 2-4 3.500-4s.5 4 3.500 4c4.500 0 5.500-6 1-7 3-1.500 3-6-1-6-3 0-2 3.500-3.500 3.500s-.5-3.500-3.500-3.500z" fill="none" stroke="#fff" strokeWidth="3.200" />
            </>
        ),
    },
    {
        label: "Visual Studio",
        running: true,
        art: (
            <>
                <path d="M18 0l6 2v20l-6 2z" fill="#865fc5" />
                <path d="M0 18l18 2v4z" fill="#865fc5" />
                <path d="M1.500 6.500l1.500-1 5 4 6-5 2 1v11l-2 1-6-5-5 4-1.500-1zM4 9v4.500L6.300 11zM14 7.500L10 11l4 3.500z" fill="#865fc5" fillRule="evenodd" />
            </>
        ),
    },
];

function TaskBar() {
    return (
        <div className="flex h-10 shrink-0 items-stretch bg-[#1b2a41] text-xs text-white">
            <div className="flex gap-px pl-[2px]">
                {apps.map((app) => (
                    <button
                        key={app.label}
                        aria-label={app.label}
                        className={`flex w-12 flex-col items-center justify-end ${app.active ? "bg-[#485769]" : ""}`}
                    >
                        <svg width="24" height="24" viewBox="0 0 24 24" className="mb-[6px]">{app.art}</svg>
                        <span className={`h-[2px] ${app.active ? "w-full bg-[#76b9ed]" : app.running ? "w-10 bg-[#76b9ed]" : "w-0"}`} />
                    </button>
                ))}
            </div>
            <div className="ml-auto flex items-center">
                <svg width="12" height="7" viewBox="0 0 12 7" fill="none" stroke="#fff" strokeWidth="1.300"><path d="M.5 6.500L6 1l5.500 5.500" /></svg>
                <svg width="17" height="14" viewBox="0 0 17 14" fill="none" stroke="#fff" strokeWidth="1.200" className="ml-[10px]">
                    <path d="M.8 4.800h2.700L7 1.500v11L3.500 9.200H.8zM9 5c1 1.300 1 2.700 0 4M11.500 3c2 2.500 2 5.500 0 8" />
                    <path d="M14 1.500c2.500 3.500 2.500 7.500 0 11" stroke="#778" />
                </svg>
                <svg width="16" height="9" viewBox="0 0 16 9" fill="none" stroke="#fff" strokeWidth="1.200" className="ml-[9px]">
                    <path d="M.6.600h13v7.800H.6zM15 2.500v4" />
                    <path d="M2.500 2.500h5v4h-5z" fill="#fff" stroke="none" />
                </svg>
                <svg width="14" height="13" viewBox="0 0 14 13" fill="none" stroke="#fff" className="ml-[10px]">
                    <path d="M1 11C1 5 6 1 13 1" stroke="#99a" />
                    <path d="M3.500 12c0-5 4-8 9.500-8M6.500 12c0-3 3-5 6.500-5M9.500 12c0-1.500 1.500-2.500 3-2.500" />
                    <circle cx="12" cy="12" r="1" fill="#fff" stroke="none" />
                </svg>
                <span className="ml-3 text-[11px]">ESP</span>
                <div className="ml-3 text-center text-[11px] leading-[18px]">
                    <div>20:10</div>
                    <div>18/10/2022</div>
                </div>
                <div className="relative mr-5 ml-[15px]">
                    <svg width="16" height="16" viewBox="0 0 16 16"><path d="M0 1h16v11H8l-3 4v-4H0z" fill="#fff" /><path d="M3 4h10M3 6.500h10M3 9h6" stroke="#1b2a41" /></svg>
                    <span className="absolute top-[7px] left-2 flex size-4 items-center justify-center rounded-full border border-[#8d939d] bg-[#2b333f] text-[11px] leading-none font-semibold">4</span>
                </div>
                <span className="mr-1 h-full w-px bg-[#5b6675]" />
            </div>
        </div>
    );
}

export default function App() {
    return (
        <div className="flex h-screen flex-col overflow-hidden font-['Open_Sans',sans-serif]">
            <TitleBar />
            <ToolBar />

            <div className="flex min-h-0 flex-1 bg-white font-['Liberation_Sans',Arial,sans-serif] text-[13px] leading-4 text-[#444]">
                <Sidebar />

                <main className="flex min-w-0 flex-1 flex-col">
                    <Breadcrumb />
                    <Tabs />
                    <div className="min-h-0 flex-1 overflow-hidden pl-1">
                        <div className="mt-[9px] mb-2 flex gap-[6px] pl-2 font-bold">
                            <IconLink icon={<StructIcon />} className="h-[30px] gap-3 rounded-sm border border-[#ddd] pr-[11px] pl-3">Estructura de tabla</IconLink>
                            <IconLink icon={<RelationIcon />} className="h-[30px] gap-[10px] rounded-full border border-[#ddd] bg-[#f2f2f2] pr-[11px] pl-[14px]">Vista de relaciones</IconLink>
                        </div>

                        <ColumnTable />
                        <BulkActions />

                        <hr className="mt-[17px] mr-[7px] border-[#444]" />

                        <div className="mt-[18px] flex items-center gap-[21px] pl-[3px]">
                            <IconLink icon={<PrintIcon />}>Imprimir</IconLink>
                            <div className="flex items-center gap-[10px]">
                                <IconLink icon={<ProposeIcon />}>Planteamiento de la estructura de tabla</IconLink>
                                <a href="#" aria-label="Ayuda"><HelpIcon /></a>
                            </div>
                            <IconLink icon={<EyeIcon />}>Hacer seguimiento a la tabla</IconLink>
                            <IconLink icon={<MoveIcon />}>Mover columnas</IconLink>
                            <IconLink icon={<WandIcon />}>Normalizar</IconLink>
                        </div>
                        <AddColumns />
                        <IndexPanel />
                    </div>
                    <ConsoleBar />
                </main>

                <ScrollBar />
            </div>

            <TaskBar />
        </div>
    );
}
